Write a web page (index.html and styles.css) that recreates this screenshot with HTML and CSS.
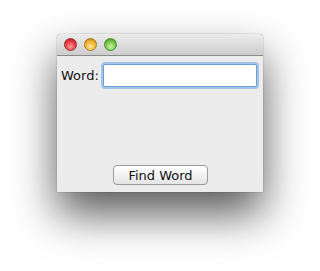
FILE: index.html
```html
<!DOCTYPE html>
<html lang="en">
<head>
    <meta charset="UTF-8">
    <title>Find Word</title>
    <link rel="stylesheet" href="styles.css">
</head>
<body>
    <div class="desktop">
        <div class="window">
            <div class="titlebar">
                <span class="light red"></span>
                <span class="light yellow"></span>
                <span class="light green"></span>
            </div>
            <div class="content">
                <div class="row">
                    <label for="word">Word:</label>
                    <input type="text" id="word" class="word-input">
                </div>
                <div class="buttons">
                    <button class="btn">Find Word</button>
                </div>
            </div>
        </div>
    </div>
</body>
</html>
```
FILE: styles.css
```css
body {
  margin: 0;
  background-color: #fff;
  font-family: "DejaVu Sans", sans-serif;
  font-size: 13px;
  color: #111;
}

.desktop {
  height: 271px;
  box-sizing: border-box;
  padding: 34px 0 0 57px;
  overflow: hidden;
}

/* Window */
.window {
  width: 206px;
  height: 158px;
  display: flex;
  flex-direction: column;
  background-color: #ececec;
  border-radius: 4px 4px 0 0;
  box-shadow: 0 22px 44px rgba(0, 0, 0, 0.65), 0 0 1px rgba(0, 0, 0, 0.7);
}

.titlebar {
  height: 21px;
  display: flex;
  align-items: center;
  gap: 7px;
  padding-left: 7px;
  background: linear-gradient(#ececec, #cdcdcd);
  border-bottom: 1px solid #8a8a8a;
  border-radius: 4px 4px 0 0;
}

.light {
  width: 13px;
  height: 13px;
  border-radius: 50%;
  box-sizing: border-box;
}

.red {
  background: radial-gradient(circle at 50% 70%, #ff9a9a, #e0353d 60%, #a3141c);
  border: 1px solid #a0262b;
}

.yellow {
  background: radial-gradient(circle at 50% 70%, #ffe79a, #f0ad2c 60%, #b0770e);
  border: 1px solid #a87a1f;
}

.green {
  background: radial-gradient(circle at 50% 70%, #c8f8a0, #70c043 60%, #3c8a1f);
  border: 1px solid #4e8a2c;
}

/* Content */
.content {
  flex: 1;
  display: flex;
  flex-direction: column;
  justify-content: space-between;
  padding: 8px 6px 7px 4px;
}

.row {
  display: flex;
  align-items: center;
  gap: 4px;
}

.word-input {
  width: 154px;
  height: 23px;
  box-sizing: border-box;
  border: 1px solid #6d9fd6;
  box-shadow: 0 0 0 2px #a3c3e8;
  border-radius: 2px;
  background-color: #fff;
  outline: none;
}

.buttons {
  display: flex;
  justify-content: center;
  padding-left: 3px;
}

.btn {
  width: 95px;
  height: 20px;
  font-family: "DejaVu Sans", sans-serif;
  font-size: 13px;
  color: #111;
  background: linear-gradient(#ffffff, #f2f2f2 50%, #e4e4e4);
  border: 1px solid #9a9a9a;
  border-radius: 4px;
  padding: 0;
}
```
